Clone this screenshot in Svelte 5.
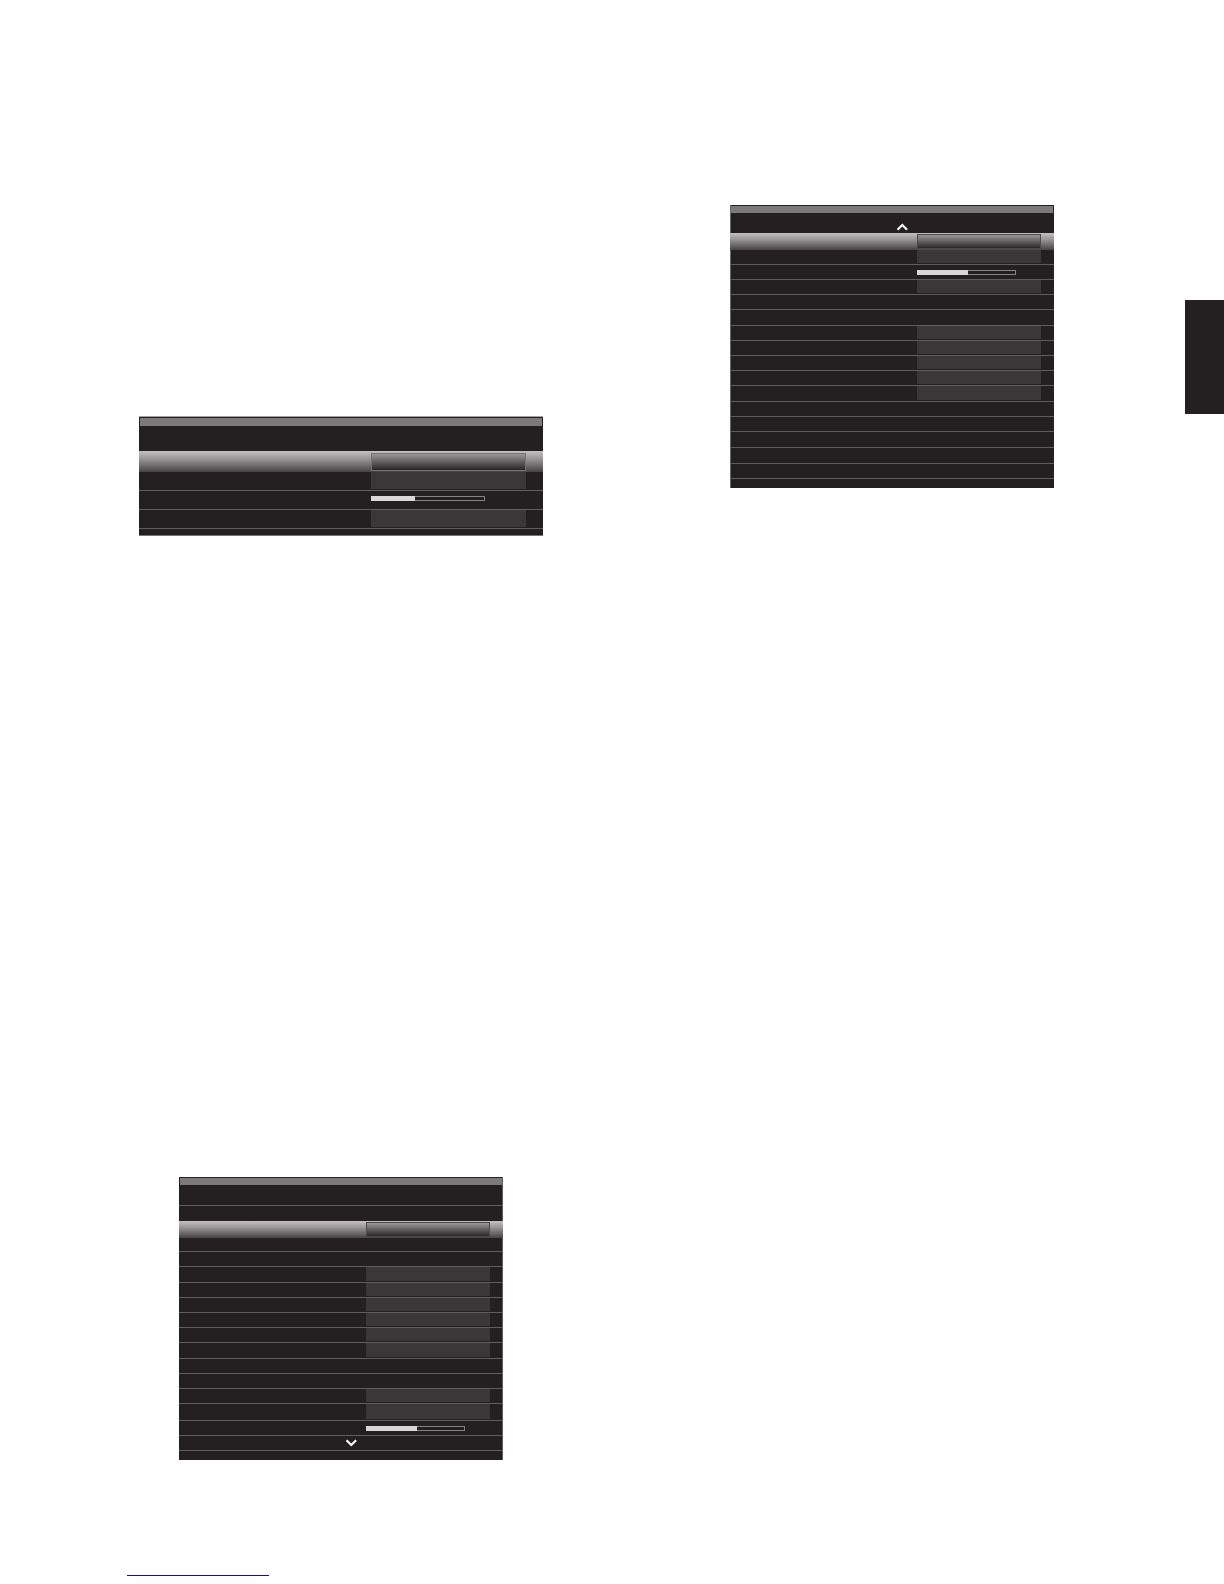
<script lang="ts">
  type Row = {
    kind: 'plain' | 'field' | 'selected' | 'slider' | 'up' | 'down';
    h: number;
    line?: boolean;
    value?: number;
  };

  type Menu = { name: string; rows: Row[] };

  const row = (kind: Row['kind'], h: number, line = true, value = 0): Row => ({ kind, h, line, value });

  const basicMenu: Menu = {
    name: 'basic',
    rows: [
      row('plain', 25, false),
      row('selected', 21, false),
      row('field', 19),
      row('slider', 19, true, 39),
      row('field', 19),
      row('plain', 6, false)
    ]
  };

  const firstPage: Menu = {
    name: 'first',
    rows: [
      row('plain', 21),
      row('plain', 15, false),
      row('selected', 17, false),
      row('plain', 14),
      row('plain', 15),
      row('field', 16),
      row('field', 15),
      row('field', 15),
      row('field', 15),
      row('field', 15),
      row('field', 16),
      row('plain', 15),
      row('plain', 15),
      row('field', 15),
      row('field', 17),
      row('slider', 15, true, 52),
      row('down', 15),
      row('plain', 9, false)
    ]
  };

  const secondPage: Menu = {
    name: 'second',
    rows: [
      row('up', 20, false),
      row('selected', 17, false),
      row('field', 15),
      row('slider', 15, true, 52),
      row('field', 15),
      row('plain', 15),
      row('plain', 16),
      row('field', 15),
      row('field', 15),
      row('field', 15),
      row('field', 15),
      row('field', 16),
      row('plain', 15),
      row('plain', 15),
      row('plain', 16),
      row('plain', 16),
      row('plain', 15),
      row('plain', 9, false)
    ]
  };
</script>

{#snippet panel(menu: Menu)}
  <section class="panel {menu.name}">
    <div class="title-bar"></div>
    <ul>
      {#each menu.rows as r}
        <li class="row {r.kind}" class:line={r.line} style="height: {r.h}px">
          {#if r.kind === 'field' || r.kind === 'selected'}
            <button class="value" type="button" aria-label="Change value"></button>
          {:else if r.kind === 'slider'}
            <input
              class="level"
              type="range"
              min="0"
              max="100"
              value={r.value}
              style="--level: {r.value}%"
              aria-label="Level"
            />
          {:else if r.kind === 'up' || r.kind === 'down'}
            <button class="scroll" type="button" aria-label="Scroll {r.kind}">
              <svg width="12" height="8" viewBox="0 0 12 8" fill="none" stroke="#fff" stroke-width="2">
                <path d={r.kind === 'up' ? 'M1.5 6.8L6.3 2l4.8 4.8' : 'M1.5 1.2L6.3 6l4.8-4.8'} />
              </svg>
            </button>
          {/if}
        </li>
      {/each}
    </ul>
  </section>
{/snippet}

<main class="page">
  <div class="column left">
    {@render panel(basicMenu)}
    {@render panel(firstPage)}
  </div>
  <div class="column right">
    {@render panel(secondPage)}
  </div>
  <aside class="tab"></aside>
  <footer>
    <a href="#top" aria-label="Back to top"></a>
  </footer>
</main>

<style>
  :global(body) {
    background: #fff;
    font-family: "Liberation Sans", Arial, sans-serif;
  }

  .page {
    display: grid;
    grid-template-columns: 682fr 420fr 122fr;
    align-items: start;
  }

  .column {
    display: flex;
    flex-direction: column;
    align-items: center;
  }

  .left { padding-top: 416px; gap: 641px; }
  .right { padding-top: 205px; }

  .panel {
    --field: 124px;
    --edge: 13px;
    --track: 99px;
    box-sizing: border-box;
    width: 324px;
    padding-top: 1px;
    background: #242021;
  }

  .basic {
    --field: 155px;
    --edge: 17px;
    --track: 114px;
    width: 404px;
    border-top: 1px solid #a5a3a4;
    border-bottom: 1px solid #767475;
  }

  .first { box-shadow: inset -1px 0 #5c595a; }
  .second { box-shadow: inset 1px 0 #6a6869; }

  .title-bar {
    height: 7px;
    margin: 0 1px;
    background: #7b7979;
  }

  .basic .title-bar { height: 8px; }

  ul {
    margin: 0;
    padding: 0;
    list-style: none;
  }

  .row {
    box-sizing: border-box;
    display: grid;
    grid-template-columns: 1fr var(--field) var(--edge);
  }

  .line {
    border-bottom: 1px solid #5f5c5d;
  }

  .selected {
    background: linear-gradient(#c2c0c1, #9b999a 35%, #464344);
  }

  button {
    padding: 0;
    border: none;
    background: none;
    cursor: pointer;
  }

  .value {
    grid-column: 2;
    margin-bottom: 1px;
    background: #3b3738;
  }

  .selected .value {
    margin: 1px 0;
    border: 1px solid #4b494a;
    background: linear-gradient(#999798, #2a2627);
  }

  .basic .selected .value {
    margin: 2px 0 1px;
    border-color: #747273;
  }

  .level {
    grid-column: 2;
    align-self: start;
    box-sizing: border-box;
    width: var(--track);
    height: 5px;
    margin: 5px 0 0;
    border: 1px solid #858283;
    background: linear-gradient(to right, #dad7d8 var(--level), #231f20 var(--level)) border-box;
    border-image: linear-gradient(to right, #dad7d8 var(--level), #858283 var(--level)) 1;
    appearance: none;
    cursor: pointer;
  }

  .level::-webkit-slider-thumb {
    width: 0;
    height: 0;
    appearance: none;
  }

  .scroll {
    display: flex;
    grid-column: 1 / -1;
    align-items: center;
    justify-content: center;
    padding-left: 20px;
  }

  .up .scroll { align-items: flex-end; padding-bottom: 2px; }

  .tab {
    justify-self: end;
    width: 39px;
    height: 114px;
    margin-top: 300px;
    background: #242021;
  }

  footer {
    grid-column: 1 / -1;
    padding: 115px 0 8px 127px;
  }

  footer a {
    display: block;
    width: 142px;
    border-bottom: 1px solid #10109a;
  }
</style>
